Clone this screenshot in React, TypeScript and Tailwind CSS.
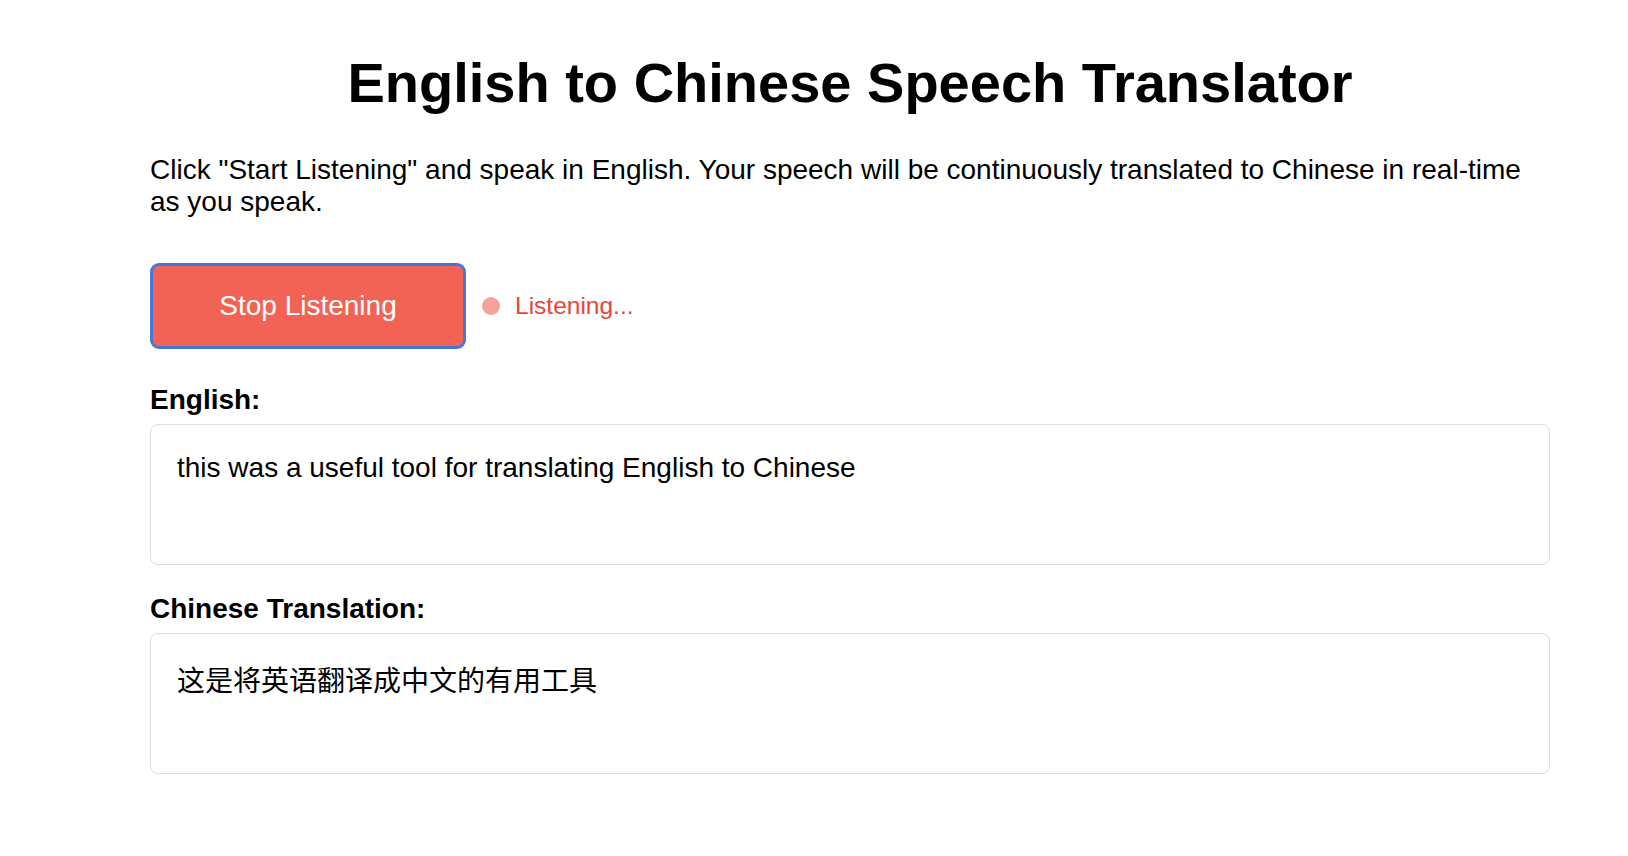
import React from "react";

const TranslatorPage = () => {
  const englishText = "this was a useful tool for translating English to Chinese";
  const chineseText = "这是将英语翻译成中文的有用工具";

  return (
    <div className="min-h-screen bg-white text-black font-['Liberation_Sans','Noto_Sans_CJK_SC',sans-serif]">
      <div className="ml-[150px] w-[1400px] pt-[51px]">
        <h1 className="text-center text-[56px] font-bold leading-[64px]">
          English to Chinese Speech Translator
        </h1>
        <p className="mt-[39px] text-[28px] leading-[32px]">
          Click "Start Listening" and speak in English. Your speech will be
          continuously translated to Chinese in real-time as you speak.
        </p>

        <div className="mt-[45px] flex items-center gap-[16px]">
          <button className="h-[86px] w-[316px] rounded-[9px] border-[3px] border-[#4676d6] bg-[#f26355] text-[28px] text-white">
            Stop Listening
          </button>
          <div className="flex items-center gap-[15px]">
            <span className="h-[18px] w-[18px] rounded-full bg-[#f5a29b]" />
            <span className="text-[24.5px] text-[#ec4436]">Listening...</span>
          </div>
        </div>

        <h2 className="mt-[35px] text-[28px] font-bold leading-[32px]">
          English:
        </h2>
        <div className="mt-[8px] h-[141px] rounded-[8px] border border-[#dddddd] px-[26px] pt-[27px] text-[28px] leading-[32px]">
          {englishText}
        </div>

        <h2 className="mt-[28px] text-[28px] font-bold leading-[32px]">
          Chinese Translation:
        </h2>
        <div className="mt-[8px] h-[141px] rounded-[8px] border border-[#dddddd] px-[26px] pt-[32px] text-[28px] leading-[32px]">
          {chineseText}
        </div>
      </div>
    </div>
  );
};

export default function App() {
  return <TranslatorPage />;
}
